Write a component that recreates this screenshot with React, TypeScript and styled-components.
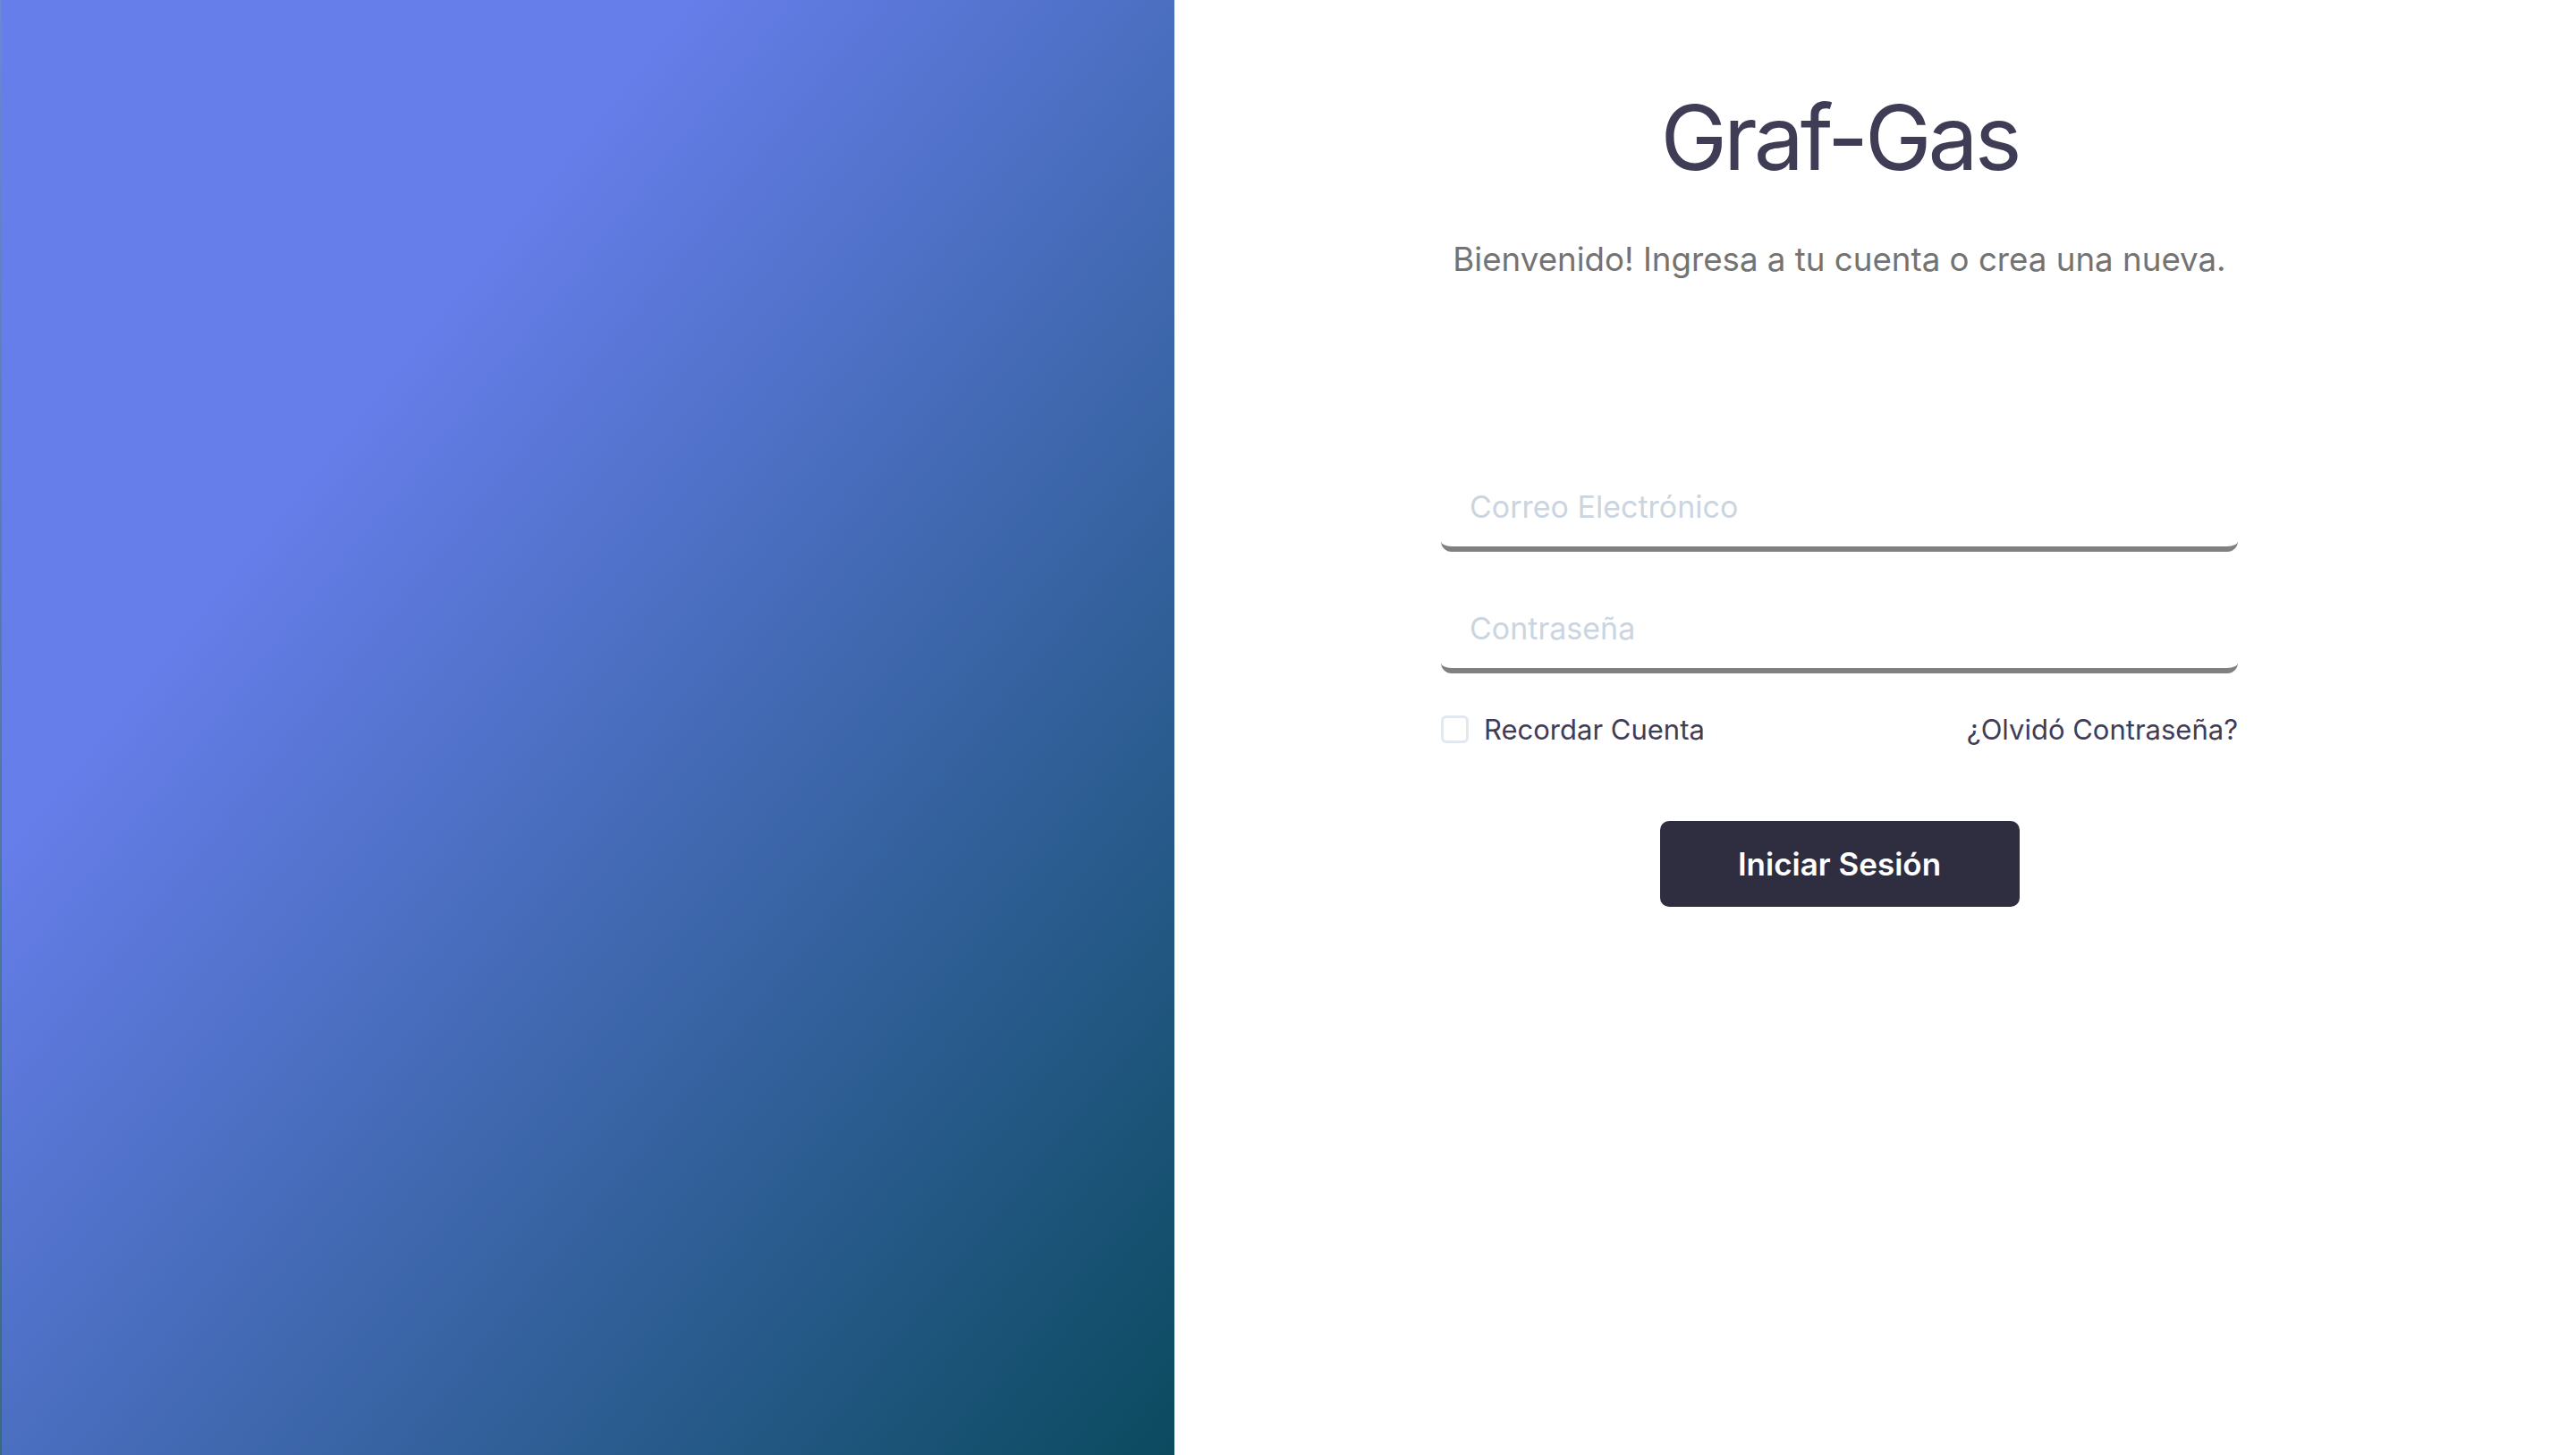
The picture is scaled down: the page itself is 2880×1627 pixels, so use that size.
import React from "react";
import styled, { createGlobalStyle } from "styled-components";

const GlobalStyle = createGlobalStyle`
  html, body {
    margin: 0;
    padding: 0;
    background: #ffffff;
  }
  body {
    font-family: Inter, "Noto Sans", "Liberation Sans", sans-serif;
    -webkit-font-smoothing: antialiased;
  }
  * { box-sizing: border-box; }
`;

const Page = styled.div`
  display: grid;
  grid-template-columns: 1313px 1fr;
  height: 1627px;
  width: 2880px;
  overflow: hidden;
`;

const Hero = styled.aside`
  background: linear-gradient(to bottom right, #667eea 29%, #0b4a5f 100%);
  border-left: 2px solid rgba(255, 255, 255, 0.18);
`;

const Side = styled.main`
  display: flex;
  justify-content: center;
  padding-right: 80px;
  background: #ffffff;
`;

const Form = styled.form`
  width: 891px;
  display: flex;
  flex-direction: column;
  padding-top: 104px;
`;

const Title = styled.h1`
  margin: 0;
  font-size: 100px;
  line-height: 1;
  font-weight: 400;
  letter-spacing: -0.04em;
  color: #3f3d56;
  text-align: center;
`;

const Subtitle = styled.p`
  margin: 62px 0 0;
  font-size: 36.7px;
  line-height: 48px;
  font-weight: 400;
  color: #737373;
  text-align: center;
`;

const Field = styled.input<{ $first?: boolean }>`
  margin-top: ${(p) => (p.$first ? "219px" : "52px")};
  height: 84px;
  width: 100%;
  padding: 0 32px 12px;
  border: none;
  border-bottom: 6px solid #808080;
  border-radius: 12px;
  background: #ffffff;
  font-family: inherit;
  font-size: 34px;
  color: #3f3d56;
  outline: none;
  &::placeholder {
    color: #cbd5e0;
  }
`;

const OptionsRow = styled.div`
  margin-top: 42px;
  height: 40px;
  display: flex;
  align-items: center;
  justify-content: space-between;
`;

const CheckLabel = styled.label`
  display: flex;
  align-items: center;
  gap: 17px;
  font-size: 31px;
  color: #3f3d56;
`;

const Box = styled.input`
  appearance: none;
  margin: 0;
  width: 31px;
  height: 31px;
  border: 3px solid #e2e8f0;
  border-radius: 6px;
  background: #ffffff;
`;

const Forgot = styled.a`
  font-size: 31px;
  color: #3f3d56;
  text-decoration: none;
`;

const Submit = styled.button`
  margin: 83px auto 0;
  width: 402px;
  height: 96px;
  border: none;
  border-radius: 10px;
  background: #2f2e41;
  color: #ffffff;
  font-family: inherit;
  font-size: 35px;
  font-weight: 600;
`;

export default function App() {
  return (
    <>
      <GlobalStyle />
      <Page>
        <Hero />
        <Side>
          <Form onSubmit={(e) => e.preventDefault()}>
            <Title>Graf-Gas</Title>
            <Subtitle>Bienvenido! Ingresa a tu cuenta o crea una nueva.</Subtitle>
            <Field $first type="email" placeholder="Correo Electrónico" />
            <Field type="password" placeholder="Contraseña" />
            <OptionsRow>
              <CheckLabel>
                <Box type="checkbox" />
                Recordar Cuenta
              </CheckLabel>
              <Forgot href="#">¿Olvidó Contraseña?</Forgot>
            </OptionsRow>
            <Submit type="submit">Iniciar Sesión</Submit>
          </Form>
        </Side>
      </Page>
    </>
  );
}
